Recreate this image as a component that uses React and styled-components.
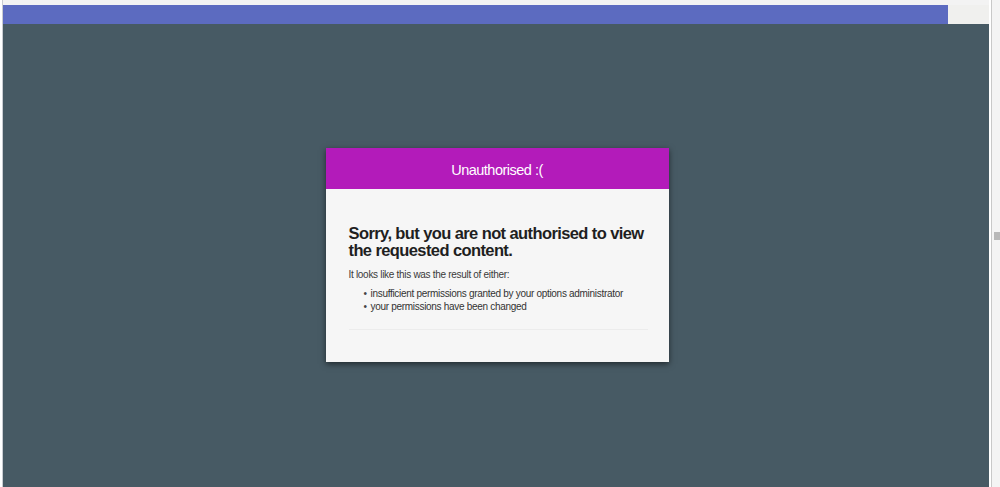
import React from "react";
import styled, { createGlobalStyle } from "styled-components";

const Global = createGlobalStyle`
  html, body { margin: 0; padding: 0; }
  body { font-family: "Liberation Sans", Arial, sans-serif; background: #ffffff; }
`;

const Window = styled.div`
  width: 1000px;
  height: 487px;
  display: flex;
  background: #ffffff;
  overflow: hidden;
`;

const Main = styled.div`
  flex: 1;
  margin-left: 2px;
  border-left: 1px solid #c9ccd2;
  display: flex;
  flex-direction: column;
`;

const TopGap = styled.div`
  height: 5px;
  background: #f3f3f3;
`;

const TopRow = styled.div`
  height: 19px;
  display: flex;
  background: #f0f0ee;
`;

const Progress = styled.div`
  width: 945px;
  background: #5c6bc0;
`;

const Stage = styled.div`
  flex: 1;
  background: #475a64;
  display: flex;
  align-items: center;
  justify-content: center;
`;

const Card = styled.div`
  width: 343px;
  height: 214px;
  background: #f6f6f6;
  box-shadow: 0 2px 6px rgba(0, 0, 0, 0.55);
  display: flex;
  flex-direction: column;
  margin: -2px 0 0 2px;
`;

const Header = styled.div`
  height: 41px;
  box-sizing: border-box;
  padding-top: 4px;
  background: #b31bba;
  color: #ffffff;
  font-size: 14.5px;
  letter-spacing: -0.5px;
  display: flex;
  align-items: center;
  justify-content: center;
`;

const Body = styled.div`
  padding: 36px 21px 0 23px;
  color: #333333;
`;

const Heading = styled.h2`
  margin: 0 -12px 9px 0;
  font-size: 16.5px;
  line-height: 17px;
  letter-spacing: -0.6px;
  font-weight: bold;
  color: #1f1f1f;
`;

const Text = styled.p`
  margin: 0 0 6px;
  font-size: 10px;
  letter-spacing: -0.3px;
  line-height: 13px;
  color: #3a3a3a;
`;

const List = styled.ul`
  margin: 0;
  padding-left: 22px;
  list-style: none;
`;

const Item = styled.li`
  font-size: 10px;
  letter-spacing: -0.3px;
  line-height: 13px;
  color: #333333;
  position: relative;
  &::before {
    content: "•";
    position: absolute;
    left: -7px;
    color: #444;
  }
`;

const Divider = styled.hr`
  border: 0;
  border-top: 1px solid #ececec;
  margin: 16px 0 0;
`;

const Scrollbar = styled.div`
  width: 9px;
  border-left: 2px solid #ffffff;
  display: flex;
  flex-direction: column;
  align-items: stretch;
  background: #f4f4f4;
  box-shadow: inset 1px 0 0 #c9c9c9;
  padding-top: 232px;
`;

const Thumb = styled.div`
  height: 8px;
  margin-left: 3px;
  background: #b8b8b8;
`;

export default function App() {
  return (
    <>
      <Global />
      <Window>
        <Main>
          <TopGap />
          <TopRow>
            <Progress />
          </TopRow>
          <Stage>
            <Card>
              <Header>Unauthorised :(</Header>
              <Body>
                <Heading>Sorry, but you are not authorised to view the requested content.</Heading>
                <Text>It looks like this was the result of either:</Text>
                <List>
                  <Item>insufficient permissions granted by your options administrator</Item>
                  <Item>your permissions have been changed</Item>
                </List>
                <Divider />
              </Body>
            </Card>
          </Stage>
        </Main>
        <Scrollbar>
          <Thumb />
        </Scrollbar>
      </Window>
    </>
  );
}
